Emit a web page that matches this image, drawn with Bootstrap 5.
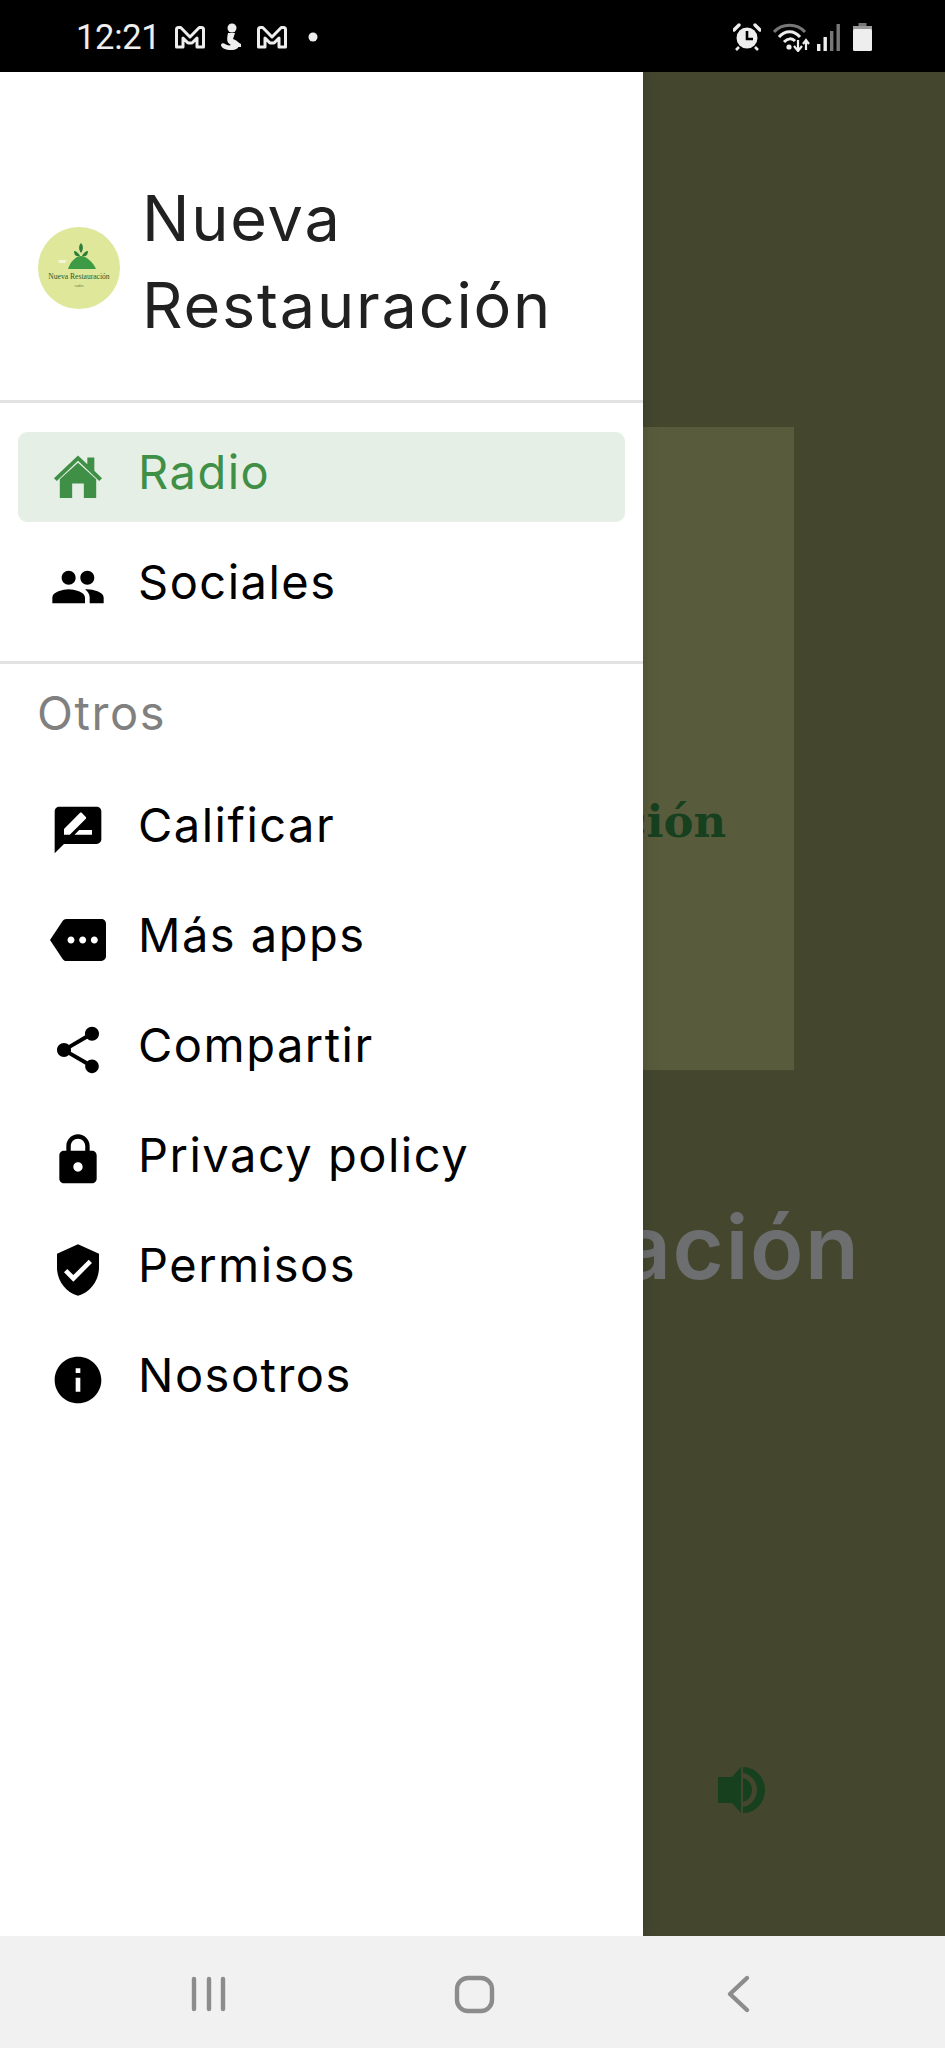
<!doctype html>
<html lang="es">
<head>
<meta charset="utf-8">
<title>Nueva Restauración</title>
<link href="https://cdn.jsdelivr.net/npm/bootstrap@5.3.0/dist/css/bootstrap.min.css" rel="stylesheet">
<style>
html,body{margin:0;height:2048px;overflow:hidden;background:#000;font-family:Inter,"Liberation Sans",sans-serif}
.shell{width:945px;height:2048px}
.stat{height:72px;background:#000;color:#eee;padding:2px 73px 0 76px}
.stat-time{font-family:Roboto,sans-serif;font-size:34.5px;line-height:1;letter-spacing:-.3px;margin-right:15px;padding-top:1px}
.stat svg{display:block;flex:none}
.st-gap{margin-left:14px}
.st-dot{margin-left:21px}
.st-a{margin-left:12px}
.st-b{margin-left:6px}
.stage{height:1864px;background:#44472e;padding-top:355px;overflow:hidden}
.art{width:643px;height:643px;background:#595c3c;padding-top:372px;flex:none}
.art-name{font-family:"DejaVu Serif",serif;font-weight:700;font-size:45px;line-height:1;color:#17401f;white-space:nowrap}
.big-name{font-size:88px;line-height:1;font-weight:600;color:#6d6e70;white-space:nowrap;margin-top:133px;margin-right:105px;letter-spacing:1.5px}
.vol{margin-top:476px;margin-left:537px;flex:none}
.drawer{left:0;top:0;bottom:0;width:643px;background:#fff;box-shadow:0 0 14px rgba(0,0,0,.18)}
.dr-head{height:331px;padding:55px 38px 0;border-bottom:3px solid #e3e3e3}
.logo-disc{width:82px;height:82px;flex:none;margin-top:8px}
.dr-title{margin:0 0 4px 22px;font-size:63px;line-height:87px;font-weight:400;color:#212121;letter-spacing:1.8px}
.dr-nav{padding:29px 18px;gap:20px}
.dr-rule{border-bottom:3px solid #e3e3e3}
.dr-link{height:90px;padding:0 0 0 32px;border-radius:9px;color:#000;font-size:47px;letter-spacing:1.5px;text-decoration:none}
.dr-link svg{width:56px;height:56px;flex:none;fill:currentColor}
.dr-link span{margin-left:32px;padding-bottom:12px;line-height:1;white-space:nowrap}
.dr-link.on{background:#e6efe6;color:#3f8f47}
.dr-cap{margin:0;padding:25px 0 0 37px;font-size:47px;line-height:1;color:#808080;font-weight:400;letter-spacing:1.6px;height:121px}
.dr-sub{padding:0 18px;gap:20px}
.sysbar{height:112px;background:#f1f1f1;padding:0}
</style>
</head>
<body>
<div class="shell d-flex flex-column">
  <div class="stat d-flex align-items-center flex-none">
    <div class="stat-time">12:21</div>
    <svg width="30" height="23" viewBox="0 0 30 23"><path d="M1.500 21V3.500c0-1 .8-2 2-2h2.200L15 11l9.300-9.500h2.200c1.200 0 2 1 2 2V21h-6.500V12l-5 5h-4l-5-5v9z" fill="none" stroke="#eee" stroke-width="3" stroke-linejoin="round"/></svg>
    <svg class="st-gap" width="24" height="28" viewBox="0 0 24 28"><circle cx="13" cy="5" r="4.500" fill="#eee"/><path d="M9 10h7l-2 6c3 1 6 3 6 6s-3 5-8 5-10-2-10-5c0-2 3-2 4-1 2 1 4 2 6 1-3-2-5-3-3-12z" fill="#eee"/><path d="M17 18l5 3v3h-3z" fill="#eee"/></svg>
    <svg class="st-gap" width="30" height="23" viewBox="0 0 30 23"><path d="M1.500 21V3.500c0-1 .8-2 2-2h2.200L15 11l9.300-9.500h2.200c1.200 0 2 1 2 2V21h-6.500V12l-5 5h-4l-5-5v9z" fill="none" stroke="#eee" stroke-width="3" stroke-linejoin="round"/></svg>
    <svg class="st-dot" width="10" height="10" viewBox="0 0 10 10"><circle cx="5" cy="5" r="4.500" fill="#eee"/></svg>
    <div class="ms-auto d-flex align-items-center">
      <svg width="28" height="28" viewBox="0 0 28 28"><circle cx="14" cy="15" r="10.500" fill="#eee"/><path d="M14 8v8h6" fill="none" stroke="#000" stroke-width="2.600"/><path d="M1 7l5-5M27 7l-5-5" stroke="#eee" stroke-width="3.400" stroke-linecap="round"/><path d="M6 24l-3 3M22 24l3 3" stroke="#eee" stroke-width="2.600"/></svg>
      <svg class="st-a" width="37" height="30" viewBox="0 0 37 30"><path d="M1 10C9 1 24 1 32 10" fill="none" stroke="#777" stroke-width="3"/><path d="M6 15C12 8 21 8 27 15M11 20c4-4 8-4 11-1" fill="none" stroke="#eee" stroke-width="3"/><circle cx="16" cy="25" r="2.600" fill="#eee"/><path d="M25 18v10M21 24l4 5 4-5" fill="none" stroke="#eee" stroke-width="2.200"/><path d="M33 28V19M30 22l3-4 3 4" fill="none" stroke="#eee" stroke-width="2.200"/></svg>
      <svg class="st-b" width="25" height="27" viewBox="0 0 25 27"><rect x="1" y="20" width="3.400" height="7" fill="#eee"/><rect x="7.500" y="13" width="3.400" height="14" fill="#eee"/><rect x="14" y="7" width="3.400" height="20" fill="#777"/><rect x="20.500" y="0" width="3.400" height="27" fill="#777"/></svg>
      <svg class="st-a" width="19" height="28" viewBox="0 0 19 28"><rect x="5.500" y="0" width="8" height="3" fill="#777"/><rect x="0" y="3" width="19" height="4" fill="#999"/><rect x="0" y="6" width="19" height="22" rx="1.500" fill="#eee"/></svg>
    </div>
  </div>

  <main class="stage position-relative d-flex flex-column align-items-center">
    <div class="art d-flex justify-content-center"><div class="art-name">Nueva Restauración</div></div>
    <div class="big-name">Nueva Restauración</div>
    <svg class="vol" width="47" height="46" viewBox="0 0 47 46"><path d="M0 10h14L23 0v46l-9-10H0z" fill="#17401f"/><path d="M25 0c12 0 22 10 22 23S37 46 25 46v-6c8-1 14-9 14-17S33 7 25 6z" fill="#17401f"/><path d="M25 11c5 1 9 6 9 12s-4 11-9 12z" fill="#17401f"/></svg>

    <aside class="drawer position-absolute d-flex flex-column">
      <header class="dr-head d-flex align-items-center">
        <svg class="logo-disc" viewBox="0 0 82 82"><circle cx="41" cy="41" r="41" fill="#dfe79b"/><path d="M30 42c2-7 8-13 13-13s12 6 15 13z" fill="#3d9a45"/><path d="M42 29c-1-3-4-5-6-5 0 4 2 6 6 5zm2 0c1-3 4-5 6-5 0 4-2 6-6 5zm-1-3c-3-4-2-8 0-10 2 2 3 6 0 10z" fill="#2f7f3a"/><path d="M20 33h9l-2 3h-6z" fill="#f3f5d8"/><text x="41" y="52" text-anchor="middle" font-family="Liberation Serif,serif" font-size="7.600" fill="#2b5a2a">Nueva Restauración</text><text x="41" y="60" text-anchor="middle" font-family="Liberation Sans,sans-serif" font-size="4" fill="#6b8a50">radio</text></svg>
        <h1 class="dr-title">Nueva Restauración</h1>
      </header>
      <nav class="dr-nav d-flex flex-column dr-rule">
        <a class="dr-link on d-flex align-items-center" href="#"><svg viewBox="0 0 24 24"><path d="M4.200 13 12 5.900l7.800 7.100V21h-5.300v-6.200h-5V21H4.200z"/><path d="M1.700 12.500 12 2.800l4 3.700V3.600h3v5.700l3.300 3.200-1.200 1.200L12 5l-9.100 8.700z"/></svg><span>Radio</span></a>
        <a class="dr-link d-flex align-items-center" href="#"><svg viewBox="0 0 24 24"><path d="M16 11c1.66 0 2.99-1.34 2.99-3S17.66 5 16 5c-1.66 0-3 1.34-3 3s1.34 3 3 3zm-8 0c1.66 0 2.99-1.34 2.99-3S9.66 5 8 5C6.34 5 5 6.34 5 8s1.34 3 3 3zm0 2c-2.33 0-7 1.17-7 3.5V19h14v-2.5c0-2.33-4.67-3.5-7-3.5zm8 0c-.29 0-.62.02-.97.05 1.16.84 1.97 1.97 1.97 3.45V19h6v-2.5c0-2.33-4.67-3.5-7-3.5z"/></svg><span>Sociales</span></a>
      </nav>
      <h2 class="dr-cap">Otros</h2>
      <nav class="dr-sub d-flex flex-column">
        <a class="dr-link d-flex align-items-center" href="#"><svg viewBox="0 0 24 24"><path d="M20 2H4c-1.100 0-1.990.9-1.990 2L2 22l4-4h14c1.100 0 2-.9 2-2V4c0-1.100-.9-2-2-2zM6 14v-2.470l6.880-6.880c.2-.2.51-.2.71 0l1.770 1.770c.2.2.2.51 0 .71L8.470 14H6zm12 0h-7.500l2-2H18v2z"/></svg><span>Calificar</span></a>
        <a class="dr-link d-flex align-items-center" href="#"><svg viewBox="0 0 24 24"><path d="M22 3H7c-.69 0-1.23.35-1.59.88L0 12l5.410 8.110c.36.53.9.89 1.590.89h15c1.100 0 2-.9 2-2V5c0-1.100-.9-2-2-2zM9 13.500c-.83 0-1.500-.67-1.500-1.500s.67-1.500 1.500-1.500 1.500.67 1.500 1.500-.67 1.500-1.500 1.500zm5 0c-.83 0-1.500-.67-1.500-1.500s.67-1.500 1.500-1.500 1.500.67 1.500 1.500-.67 1.500-1.500 1.500zm5 0c-.83 0-1.500-.67-1.500-1.500s.67-1.500 1.500-1.500 1.500.67 1.500 1.500-.67 1.500-1.500 1.500z"/></svg><span>Más apps</span></a>
        <a class="dr-link d-flex align-items-center" href="#"><svg viewBox="0 0 24 24"><path d="M18 16.080c-.76 0-1.440.3-1.960.77L8.910 12.700c.05-.23.09-.46.09-.7s-.04-.47-.09-.7l7.050-4.110c.54.5 1.250.81 2.040.81 1.660 0 3-1.340 3-3s-1.340-3-3-3-3 1.340-3 3c0 .24.04.47.09.7L8.040 9.810C7.500 9.310 6.790 9 6 9c-1.660 0-3 1.340-3 3s1.340 3 3 3c.79 0 1.500-.31 2.040-.81l7.120 4.160c-.05.21-.08.43-.08.65 0 1.610 1.310 2.920 2.920 2.920 1.610 0 2.920-1.310 2.920-2.920s-1.310-2.920-2.920-2.920z"/></svg><span>Compartir</span></a>
        <a class="dr-link d-flex align-items-center" href="#"><svg viewBox="0 0 24 24"><path d="M18 8h-1V6c0-2.760-2.240-5-5-5S7 3.240 7 6v2H6c-1.100 0-2 .9-2 2v10c0 1.100.9 2 2 2h12c1.100 0 2-.9 2-2V10c0-1.100-.9-2-2-2zm-6 9c-1.100 0-2-.9-2-2s.9-2 2-2 2 .9 2 2-.9 2-2 2zm3.100-9H8.900V6c0-1.710 1.390-3.100 3.100-3.100 1.710 0 3.100 1.390 3.100 3.100v2z"/></svg><span>Privacy policy</span></a>
        <a class="dr-link d-flex align-items-center" href="#"><svg viewBox="0 0 24 24"><path d="M12 1L3 5v6c0 5.550 3.840 10.740 9 12 5.160-1.260 9-6.450 9-12V5l-9-4zm-2 16l-4-4 1.410-1.410L10 14.170l6.590-6.590L18 9l-8 8z"/></svg><span>Permisos</span></a>
        <a class="dr-link d-flex align-items-center" href="#"><svg viewBox="0 0 24 24"><path d="M12 2C6.480 2 2 6.480 2 12s4.480 10 10 10 10-4.480 10-10S17.520 2 12 2zm1 15h-2v-6h2v6zm0-8h-2V7h2v2z"/></svg><span>Nosotros</span></a>
      </nav>
    </aside>
  </main>

  <div class="sysbar d-flex align-items-center flex-none position-relative">
    <svg width="945" height="112" viewBox="0 0 945 112"><g fill="none" stroke="#8c8c8c" stroke-width="4.400" stroke-linecap="round" stroke-linejoin="round"><path d="M194 43v30M209 43v30M223 43v30"/><rect x="457" y="42" width="35" height="33" rx="11"/><path d="M747 42 730 58l17 16"/></g></svg>
  </div>
</div>
<script src="https://cdn.jsdelivr.net/npm/bootstrap@5.3.0/dist/js/bootstrap.bundle.min.js"></script>
</body>
</html>
